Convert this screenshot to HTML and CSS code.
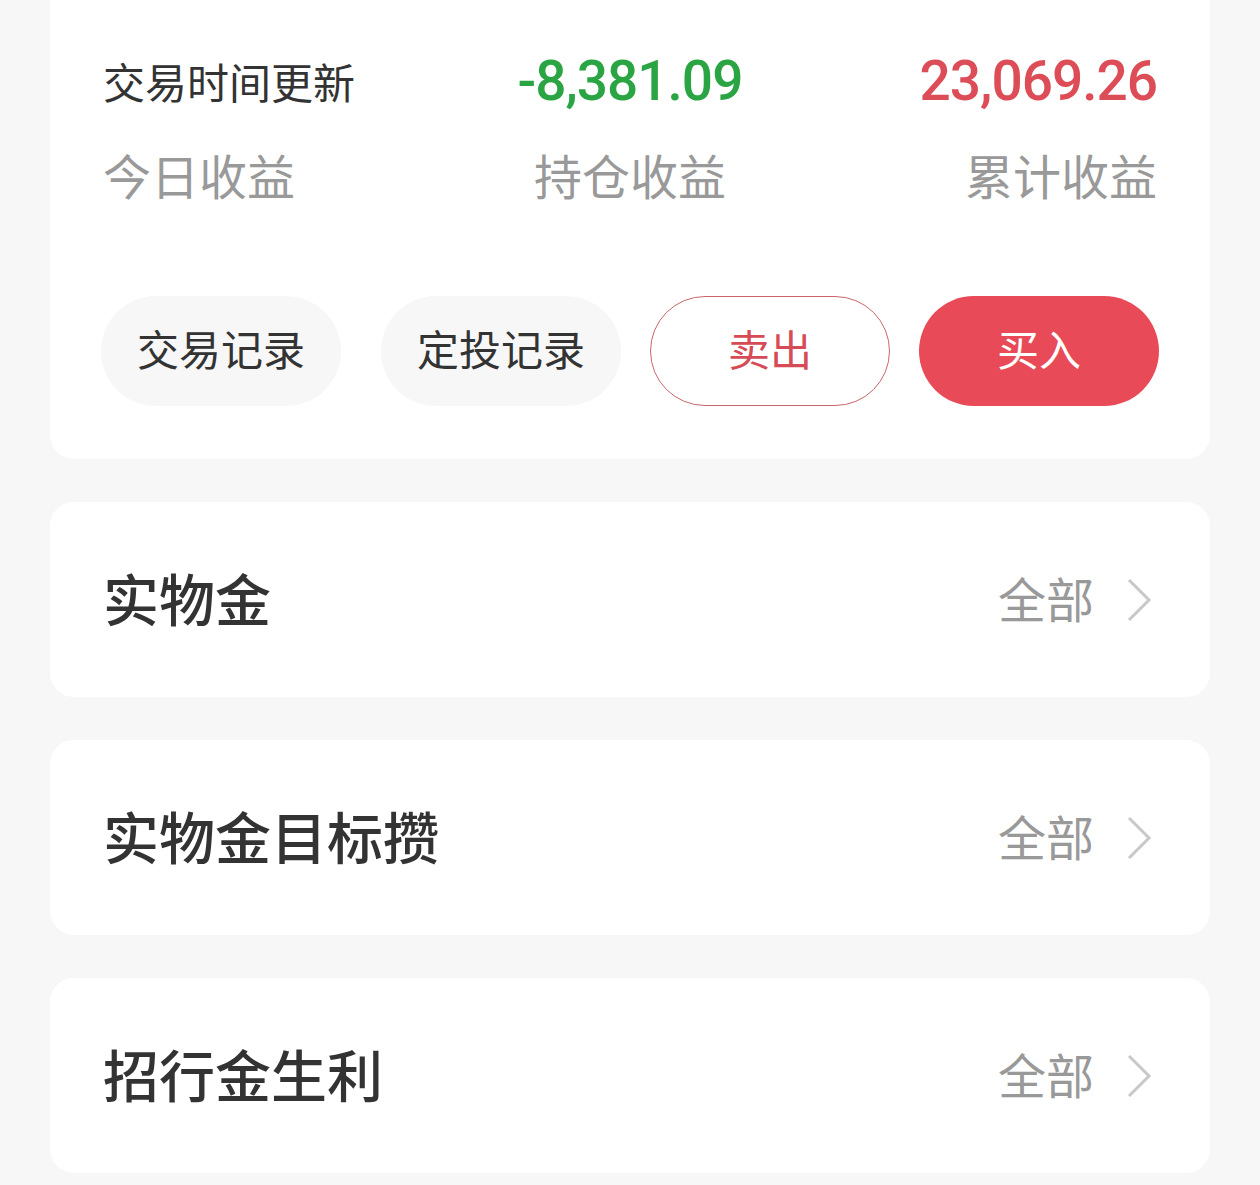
FILE: index.html
```html
<!DOCTYPE html>
<html lang="zh-CN">
<head>
    <meta charset="UTF-8">
    <meta name="viewport" content="width=device-width, initial-scale=1.0">
    <title>黄金持仓</title>
    <link rel="stylesheet" href="styles.css">
</head>
<body>
    <div class="summary-card">
        <div class="stats">
            <div class="stat-value left">交易时间更新</div>
            <div class="stat-value number green">-8,381.09</div>
            <div class="stat-value number red right">23,069.26</div>
            <div class="stat-label left">今日收益</div>
            <div class="stat-label">持仓收益</div>
            <div class="stat-label right">累计收益</div>
        </div>
        <div class="actions">
            <button class="btn btn-plain">交易记录</button>
            <button class="btn btn-plain">定投记录</button>
            <button class="btn btn-outline">卖出</button>
            <button class="btn btn-solid">买入</button>
        </div>
    </div>

    <div class="section-card">
        <div class="section-title">实物金</div>
        <div class="section-more">
            <span>全部</span>
            <svg class="chevron" viewBox="0 0 26 46"><polyline points="3,3 23,23 3,43"/></svg>
        </div>
    </div>

    <div class="section-card">
        <div class="section-title">实物金目标攒</div>
        <div class="section-more">
            <span>全部</span>
            <svg class="chevron" viewBox="0 0 26 46"><polyline points="3,3 23,23 3,43"/></svg>
        </div>
    </div>

    <div class="section-card">
        <div class="section-title">招行金生利</div>
        <div class="section-more">
            <span>全部</span>
            <svg class="chevron" viewBox="0 0 26 46"><polyline points="3,3 23,23 3,43"/></svg>
        </div>
    </div>
</body>
</html>
```

FILE: styles.css
```css
body {
    margin: 0;
    background-color: #f7f7f7;
    font-family: "Noto Sans CJK SC", "Noto Sans", sans-serif;
    color: #333;
}

.summary-card {
    margin: 0 50px;
    padding: 48px 53px 53px;
    background: #fff;
    border-radius: 0 0 24px 24px;
}

.stats {
    display: grid;
    grid-template-columns: 1fr 1fr 1fr;
    row-gap: 27px;
}

.stat-value {
    height: 66px;
    line-height: 66px;
    font-size: 42px;
    text-align: center;
    color: #333;
}

.stat-value.number {
    font-family: Roboto, "Liberation Sans", sans-serif;
    font-size: 55px;
    font-weight: 500;
    letter-spacing: -1px;
}

.green {
    color: #2ba444;
}

.red {
    color: #dc4d57;
}

.stat-label {
    height: 66px;
    line-height: 66px;
    font-size: 48px;
    color: #999;
    text-align: center;
}

.left {
    text-align: left;
}

.right {
    text-align: right;
}

.actions {
    display: flex;
    gap: 29px;
    margin: 89px -2px 0;
}

.btn {
    width: 240px;
    height: 110px;
    border-radius: 55px;
    font-family: inherit;
    font-size: 42px;
    border: none;
    padding: 0 0 8px;
    cursor: pointer;
}

.btn-plain {
    background: #f7f7f7;
    color: #333;
}

.btn-plain:first-child {
    margin-right: 11px;
}

.btn-outline {
    background: #fff;
    color: #d64b55;
    border: 1.5px solid #c9656b;
}

.btn-solid {
    background: #e84a57;
    color: #fff;
}

.section-card {
    display: flex;
    align-items: center;
    justify-content: space-between;
    height: 195px;
    margin: 43px 50px 0;
    padding: 0 58px 0 53px;
    background: #fff;
    border-radius: 24px;
}

.section-title {
    font-size: 56px;
    font-weight: 500;
    color: #333;
    padding-bottom: 6px;
}

.section-more {
    display: flex;
    align-items: center;
    gap: 32px;
    font-size: 48px;
    color: #999;
}

.section-more span {
    padding-bottom: 6px;
}

.chevron {
    width: 26px;
    height: 46px;
    fill: none;
    stroke: #c8c8c8;
    stroke-width: 3;
}
```
